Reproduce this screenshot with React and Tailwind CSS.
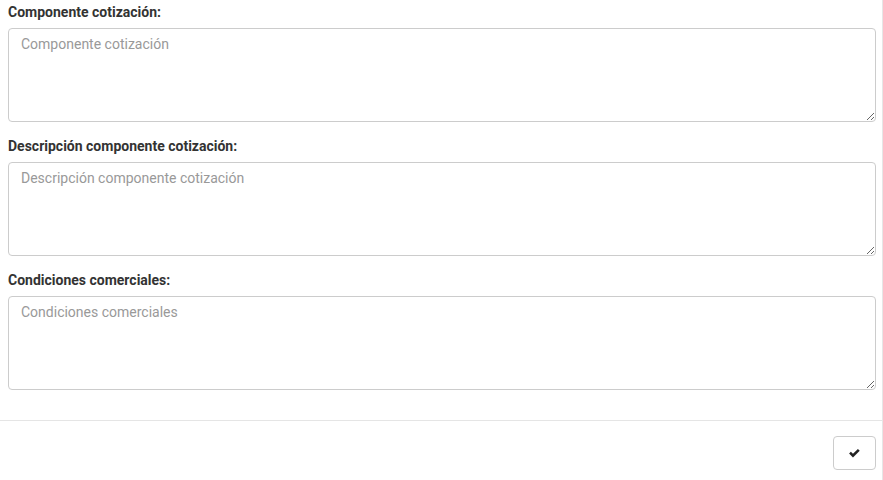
const fields = [
  { label: "Componente cotización:", placeholder: "Componente cotización" },
  { label: "Descripción componente cotización:", placeholder: "Descripción componente cotización" },
  { label: "Condiciones comerciales:", placeholder: "Condiciones comerciales" },
];

const App = () => {
  return (
    <div className="w-[883px] h-[480px] bg-white border-r border-[#e6e6e6] font-['Roboto',sans-serif] text-[#333]">
      <div className="pl-2 pr-[6px] pt-[2px] flex flex-col gap-[14px]">
        {fields.map((f) => (
          <div key={f.label}>
            <label className="block text-[14px] font-bold leading-[20px] mb-[6px]">{f.label}</label>
            <textarea
              placeholder={f.placeholder}
              className="block w-full h-[94px] border border-[#ccc] rounded-[4px] px-3 py-[5px] text-[14px] leading-[20px] placeholder:text-[#999] outline-none"
            />
          </div>
        ))}
      </div>
      <div className="mt-[30px] border-t border-[#e5e5e5] flex justify-end pr-[6px] pt-[15px]">
        <button className="w-[43px] h-[34px] border border-[#ccc] rounded-[4px] bg-white flex items-center justify-center">
          <svg width="11" height="9" viewBox="0 0 12 10" fill="#222">
            <path d="M0 5 L2 3 L4.3 5.3 L9.8 0 L11.8 2 L4.3 9.4 Z" />
          </svg>
        </button>
      </div>
    </div>
  );
};

export default App;
